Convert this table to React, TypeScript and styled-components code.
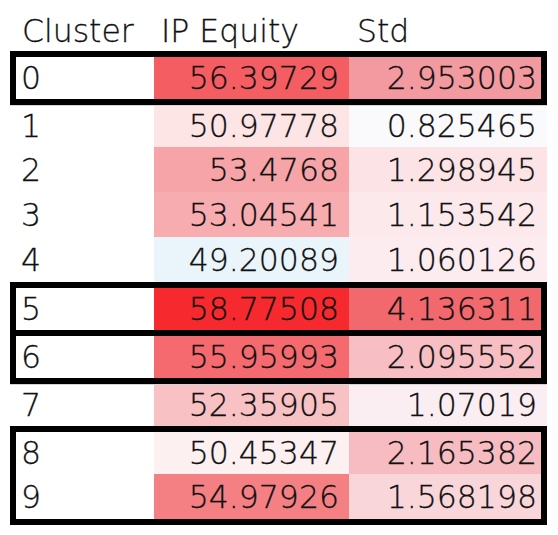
import React from "react";
import styled, { createGlobalStyle } from "styled-components";

const GlobalStyle = createGlobalStyle`
  html, body {
    margin: 0;
    padding: 0;
    background: #ffffff;
  }
  body {
    font-family: "DejaVu Sans", "Liberation Sans", sans-serif;
    font-weight: 200;
    color: #111111;
  }
`;

const Table = styled.div`
  width: 537px;
  margin-left: 10px;
  display: flex;
  flex-direction: column;
  font-size: 31.5px;
  -webkit-text-stroke: 0.3px #111111;
`;

const Grid = styled.div`
  display: grid;
  grid-template-columns: 144px 195px 198px;
`;

const HeaderRow = styled(Grid)`
  height: 51px;
  box-sizing: border-box;
  padding-top: 13px;
  line-height: 36px;
`;

const HeaderCell = styled.div<{ $pad: number }>`
  padding-left: ${(p) => p.$pad}px;
  white-space: nowrap;
`;

const Row = styled(Grid)<{ $h: number; $shift: number }>`
  height: ${(p) => p.$h}px;
  line-height: ${(p) => p.$h - p.$shift}px;
`;

const LabelCell = styled.div<{ $shift: number }>`
  padding-left: 11px;
  padding-top: ${(p) => p.$shift}px;
  background: #ffffff;
`;

const ValueCell = styled.div<{ $bg: string; $shift: number }>`
  background: ${(p) => p.$bg};
  text-align: right;
  padding-right: 10px;
  padding-top: ${(p) => p.$shift}px;
  white-space: nowrap;
`;

const Group = styled.div`
  position: relative;
  padding: 6px 0;
  box-shadow: 0 1px 0 #d4d4d4;

  &::after {
    content: "";
    position: absolute;
    inset: 0;
    border: 6px solid #000000;
    pointer-events: none;
  }
`;

const Divider = styled.div`
  height: 6px;
  background: #000000;
`;

type R = { c: string; ip: string; std: string; ipBg: string; stdBg: string; h: number; s: number };

const rows: R[] = [
  { c: "0", ip: "56.39729", std: "2.953003", ipBg: "#f45e63", stdBg: "#f29a9f", h: 42, s: 0 },
  { c: "1", ip: "50.97778", std: "0.825465", ipBg: "#fde5e6", stdBg: "#fafafc", h: 42, s: 0 },
  { c: "2", ip: "53.4768", std: "1.298945", ipBg: "#f6a4a7", stdBg: "#fce3e6", h: 45, s: 2 },
  { c: "3", ip: "53.04541", std: "1.153542", ipBg: "#f7acaf", stdBg: "#fce9ec", h: 45, s: 2 },
  { c: "4", ip: "49.20089", std: "1.060126", ipBg: "#eaf5fb", stdBg: "#fcecf0", h: 45, s: 2 },
  { c: "5", ip: "58.77508", std: "4.136311", ipBg: "#f5292e", stdBg: "#f1686d", h: 42, s: 0 },
  { c: "6", ip: "55.95993", std: "2.095552", ipBg: "#f46a6e", stdBg: "#f7bfc3", h: 42, s: 0 },
  { c: "7", ip: "52.35905", std: "1.07019", ipBg: "#f8c1c4", stdBg: "#fbeef2", h: 42, s: 0 },
  { c: "8", ip: "50.45347", std: "2.165382", ipBg: "#fcf0f0", stdBg: "#f7bcc1", h: 42, s: 0 },
  { c: "9", ip: "54.97926", std: "1.568198", ipBg: "#f58084", stdBg: "#f9d6da", h: 45, s: 2 },
];

function DataRow({ r }: { r: R }) {
  return (
    <Row $h={r.h} $shift={r.s}>
      <LabelCell $shift={r.s}>{r.c}</LabelCell>
      <ValueCell $bg={r.ipBg} $shift={r.s}>{r.ip}</ValueCell>
      <ValueCell $bg={r.stdBg} $shift={r.s}>{r.std}</ValueCell>
    </Row>
  );
}

export default function App() {
  return (
    <>
      <GlobalStyle />
      <Table>
        <HeaderRow>
          <HeaderCell $pad={12}>Cluster</HeaderCell>
          <HeaderCell $pad={7}>IP Equity</HeaderCell>
          <HeaderCell $pad={8}>Std</HeaderCell>
        </HeaderRow>
        <Group>
          <DataRow r={rows[0]} />
        </Group>
        <DataRow r={rows[1]} />
        <DataRow r={rows[2]} />
        <DataRow r={rows[3]} />
        <DataRow r={rows[4]} />
        <Group>
          <DataRow r={rows[5]} />
          <Divider />
          <DataRow r={rows[6]} />
        </Group>
        <DataRow r={rows[7]} />
        <Group>
          <DataRow r={rows[8]} />
          <DataRow r={rows[9]} />
        </Group>
      </Table>
    </>
  );
}
